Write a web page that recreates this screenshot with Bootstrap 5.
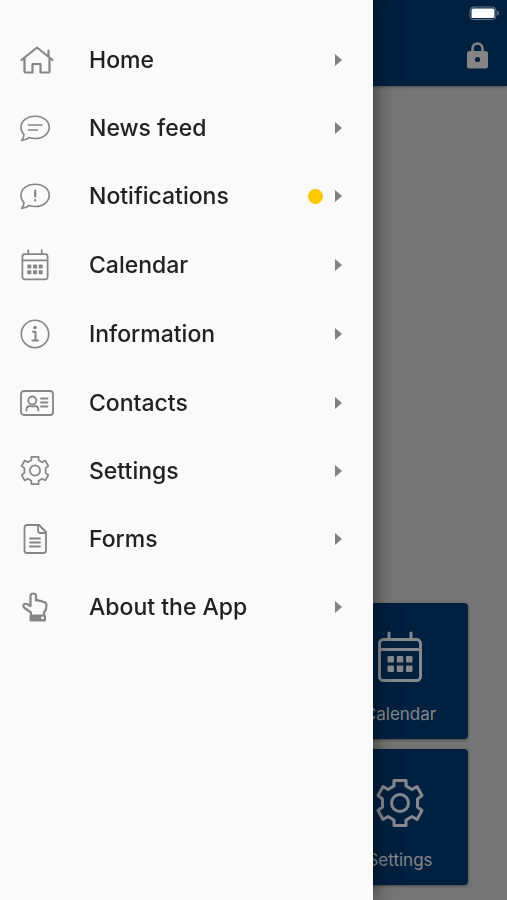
<!DOCTYPE html>
<html lang="en">
<head>
<meta charset="utf-8">
<meta name="viewport" content="width=device-width, initial-scale=1">
<title>App menu</title>
<link href="https://cdn.jsdelivr.net/npm/bootstrap@5.3.0/dist/css/bootstrap.min.css" rel="stylesheet">
<style>
  body { background: #757575; font-family: Inter, "Liberation Sans", sans-serif; }
  svg { display: block; fill: none; stroke: currentColor; stroke-linejoin: round; stroke-linecap: round; }
  .app-header { background: #00203f; height: 86px; padding: 6px 8px 0 0; box-shadow: 0 1px 3px rgba(0,0,0,.35); }
  .lock-btn { color: #858585; padding: 0; margin: 21px 11px 0 0; border: 0; }
  .tiles { gap: 10px; padding: 0 39px 15px 0; }
  .tile { width: 136px; height: 136px; background: #00203f; color: #85888c; border-radius: 4px; font-size: 17px; line-height: 22px; padding: 28px 0 14px; box-shadow: 0 1px 3px rgba(0,0,0,.4); }
  .tile:hover { color: #a5a8ac; }
  .menu-drawer.offcanvas { --bs-offcanvas-width: 73.5%; --bs-offcanvas-bg: #fafafa; border: 0; box-shadow: 0 0 20px rgba(0,0,0,.6); padding-top: 26px; }
  .menu-list { height: 615px; }
  .menu-link { color: #212121; font-size: 23px; line-height: 30px; font-weight: 500; padding: 0 31px 0 20px; }
  .menu-icon { width: 69px; color: #868686; }
  .dot { width: 15px; height: 15px; background: #ffc800; margin-right: 12px; }
  .arrow { color: #808080; fill: currentColor; stroke: none; }
</style>
</head>
<body>
<svg width="0" height="0" class="position-absolute" aria-hidden="true">
  <defs>
    <symbol id="i-cal" viewBox="0 0 44 52">
      <rect x="1.5" y="8.500" width="41" height="41" rx="4"/>
      <path d="M2 18.500h40M11 2v6M33 2v6"/>
      <g fill="currentColor" stroke="none"><rect x="9.500" y="25" width="6.500" height="6.500" rx="1"/><rect x="18.800" y="25" width="6.500" height="6.500" rx="1"/><rect x="28" y="25" width="6.500" height="6.500" rx="1"/><rect x="9.500" y="34.500" width="6.500" height="6.500" rx="1"/><rect x="18.800" y="34.500" width="6.500" height="6.500" rx="1"/><rect x="28" y="34.500" width="6.500" height="6.500" rx="1"/></g>
    </symbol>
    <symbol id="i-gear" viewBox="0 0 48 48">
      <path d="M18 1.500h12v5.500l6 3.500 5-3 5 9-4.500 3.500v8l4.500 3.500-5 9-5-3-6 3.500v5.500H18V41l-6-3.500-5 3-5-9L6.500 28v-8L2 16.500l5-9 5 3L18 7z"/>
      <circle cx="24" cy="24" r="8.500"/>
    </symbol>
    <symbol id="i-arrow" viewBox="0 0 7 12"><path d="M0 0l7 6-7 6z"/></symbol>
  </defs>
</svg>

<div class="d-flex flex-column min-vh-100">
  <header class="app-header d-flex flex-column align-items-end">
    <svg width="30" height="15" viewBox="0 0 30 15" role="img" aria-label="Battery full"><rect x="1" y="1" width="26" height="12.500" rx="3.500" stroke="#66798c"/><rect x="2.500" y="2.500" width="23" height="9.500" rx="1.500" fill="#fff" stroke="none"/><path d="M29 5.500v3" stroke="#66798c" stroke-width="1.500"/></svg>
    <button class="lock-btn btn" type="button" aria-label="Lock"><svg width="21" height="27" viewBox="0 0 21 27"><path d="M5.500 10V6.500a5 5 0 0 1 10 0V10" stroke-width="2.500"/><rect y="9" width="21" height="17.500" rx="2.500" fill="currentColor" stroke="none"/><circle cx="10.500" cy="17.500" r="2.600" fill="#00203f" stroke="none"/></svg></button>
  </header>
  <main class="tiles flex-fill d-flex flex-column justify-content-end align-items-end">
    <a href="#" class="tile d-flex flex-column justify-content-between align-items-center text-decoration-none"><svg width="44" height="52" stroke-width="3"><use href="#i-cal"/></svg>Calendar</a>
    <a href="#" class="tile d-flex flex-column justify-content-between align-items-center text-decoration-none"><svg width="48" height="52" stroke-width="3"><use href="#i-gear"/></svg>Settings</a>
  </main>
</div>

<nav class="menu-drawer offcanvas offcanvas-start show" data-bs-backdrop="false" data-bs-scroll="true" aria-label="Main menu">
  <ul class="menu-list list-unstyled d-flex flex-column mb-0">
    <li class="flex-fill d-flex"><a class="menu-link flex-fill d-flex align-items-center text-decoration-none" href="#"><span class="menu-icon"><svg width="34" height="28" viewBox="0 0 34 28" stroke-width="2.200"><path d="M1.500 14L17 1.500 32.500 14M4.500 12v13.500q0 1 1 1h7V18h8v8.500h8q1 0 1-1V12M28.500 4.500v6"/></svg></span><span class="flex-fill">Home</span><svg class="arrow" width="7" height="12"><use href="#i-arrow"/></svg></a></li>
    <li class="flex-fill d-flex"><a class="menu-link flex-fill d-flex align-items-center text-decoration-none" href="#"><span class="menu-icon"><svg width="30" height="27" viewBox="0 0 30 27" stroke-width="1.600"><path d="M4 19.500C2 17.500 1 15 1 12.500 1 6 7 1.200 15.200 1.200S29.200 6 29.200 12.300s-6 11.200-14 11.200q-3.500 0-6-1Q6 25 1.500 25.500 4 23 4 19.500zM8.500 10H22M8.500 15h9"/></svg></span><span class="flex-fill">News feed</span><svg class="arrow" width="7" height="12"><use href="#i-arrow"/></svg></a></li>
    <li class="flex-fill d-flex"><a class="menu-link flex-fill d-flex align-items-center text-decoration-none" href="#"><span class="menu-icon"><svg width="30" height="27" viewBox="0 0 30 27" stroke-width="1.600"><path d="M4 19.500C2 17.500 1 15 1 12.500 1 6 7 1.200 15.200 1.200S29.200 6 29.200 12.300s-6 11.200-14 11.200q-3.500 0-6-1Q6 25 1.500 25.500 4 23 4 19.500z"/><path d="M15.200 7.500v6M15.200 17.200v.3" stroke-width="2.200"/></svg></span><span class="flex-fill">Notifications</span><span class="dot rounded-circle" role="img" aria-label="New"></span><svg class="arrow" width="7" height="12"><use href="#i-arrow"/></svg></a></li>
    <li class="flex-fill d-flex"><a class="menu-link flex-fill d-flex align-items-center text-decoration-none" href="#"><span class="menu-icon"><svg width="30" height="32" stroke-width="2.800"><use href="#i-cal"/></svg></span><span class="flex-fill">Calendar</span><svg class="arrow" width="7" height="12"><use href="#i-arrow"/></svg></a></li>
    <li class="flex-fill d-flex"><a class="menu-link flex-fill d-flex align-items-center text-decoration-none" href="#"><span class="menu-icon"><svg width="30" height="30" viewBox="0 0 30 30" stroke-width="1.600"><circle cx="15" cy="15" r="13.700"/><circle cx="15" cy="8.500" r="1.800" fill="currentColor" stroke="none"/><path d="M13 12.800h2.500V21M12.500 21.500h5.500" stroke-width="2"/></svg></span><span class="flex-fill">Information</span><svg class="arrow" width="7" height="12"><use href="#i-arrow"/></svg></a></li>
    <li class="flex-fill d-flex"><a class="menu-link flex-fill d-flex align-items-center text-decoration-none" href="#"><span class="menu-icon"><svg width="34" height="26" viewBox="0 0 34 26" stroke-width="1.800"><rect x="1" y="1" width="32" height="24" rx="3"/><circle cx="12.300" cy="10.500" r="4"/><path d="M6.500 20.500v-1q0-3.500 3.500-3.500 2.300 1 4.600 0 3.700 0 3.700 3.500v1M21 8.500h6.500M21 12.500h6.500M21 16.500h6.500"/></svg></span><span class="flex-fill">Contacts</span><svg class="arrow" width="7" height="12"><use href="#i-arrow"/></svg></a></li>
    <li class="flex-fill d-flex"><a class="menu-link flex-fill d-flex align-items-center text-decoration-none" href="#"><span class="menu-icon"><svg width="30" height="29" stroke-width="2.800"><use href="#i-gear"/></svg></span><span class="flex-fill">Settings</span><svg class="arrow" width="7" height="12"><use href="#i-arrow"/></svg></a></li>
    <li class="flex-fill d-flex"><a class="menu-link flex-fill d-flex align-items-center text-decoration-none" href="#"><span class="menu-icon"><svg width="30" height="30" viewBox="0 0 30 30" stroke-width="1.800"><path d="M7 1h12l7 7v18.500q0 2.500-2.500 2.500H7q-2.500 0-2.500-2.500v-23Q4.500 1 7 1zM18 1v5.500Q18 9 20.500 9H26M10 14.500h10M10 18.500h10M10 22.500h10"/></svg></span><span class="flex-fill">Forms</span><svg class="arrow" width="7" height="12"><use href="#i-arrow"/></svg></a></li>
    <li class="flex-fill d-flex"><a class="menu-link flex-fill d-flex align-items-center text-decoration-none" href="#"><span class="menu-icon"><svg width="30" height="30" viewBox="0 0 30 30" stroke-width="2.200"><path d="M11 22.500V20.500l-6.500-4.500Q2.500 13.500 4 12.300t4 .2l2.500 1.500V4q0-2.500 2.800-2.500T16 4v4.500q2-.8 3.500.5 2-.6 3.300.8 3.700 0 3.700 3.700 0 4-2.500 7v2"/><path d="M10.500 22.500h14q1.500 0 1.500 1.500v4q0 1.500-1.500 1.500h-14Q9.500 29.500 9.500 28v-4q0-1.500 1-1.500z" fill="currentColor" stroke="none"/><circle cx="22.500" cy="26" r="1.400" fill="#fafafa" stroke="none"/></svg></span><span class="flex-fill">About the App</span><svg class="arrow" width="7" height="12"><use href="#i-arrow"/></svg></a></li>
  </ul>
</nav>
<script src="https://cdn.jsdelivr.net/npm/bootstrap@5.3.0/dist/js/bootstrap.bundle.min.js"></script>
</body>
</html>
